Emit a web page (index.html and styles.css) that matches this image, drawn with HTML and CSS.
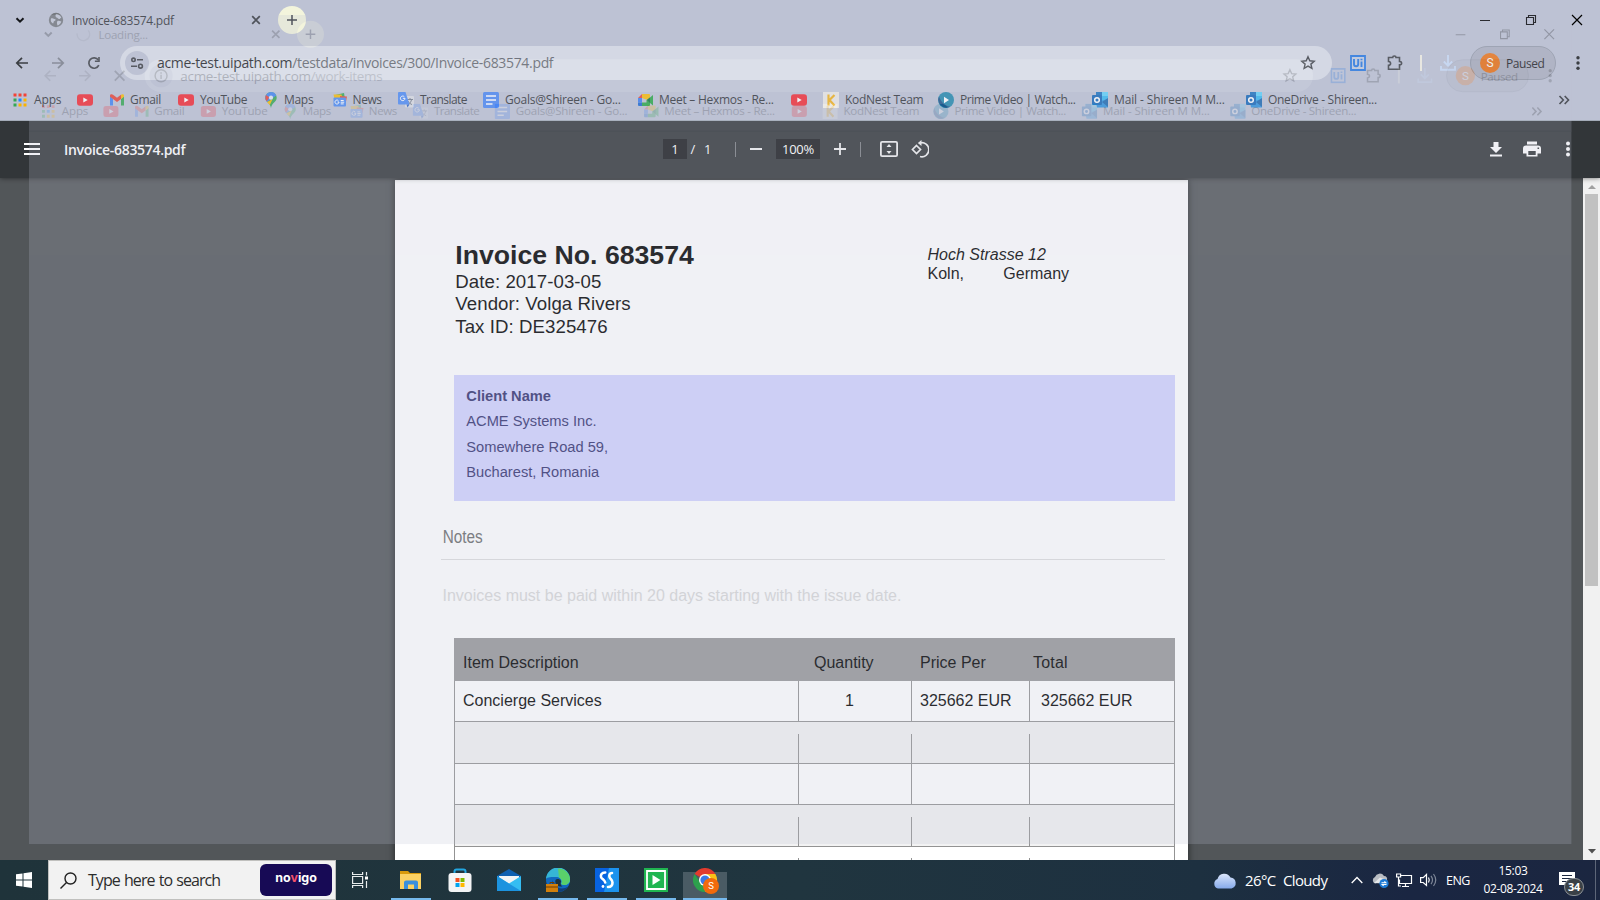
FILE: index.html
```html
<!DOCTYPE html>
<html lang="en">
<head>
<meta charset="utf-8">
<title>Invoice-683574.pdf</title>
<link rel="stylesheet" href="styles.css">
</head>
<body>
<svg class="defs" width="0" height="0">
  <symbol id="i-chev" viewBox="0 0 16 16"><path d="M4.5 6.2 8 9.7l3.500-3.500" fill="none" stroke="currentColor" stroke-width="2"/></symbol>
  <symbol id="i-globe" viewBox="0 0 16 16"><circle cx="8" cy="8" r="7.200" fill="#75797f"/><path d="M3 6.500c1.500-.5 2 .5 3.500.5s1.500 1.500 0 2-.5 2-1.500 2.500C3 10.500 2.300 8.500 3 6.500zM8 2.300c2.500-.2 4.500 1.300 5.300 3.400-1 .3-1.300 1.300-2.300 1.300S9.500 5.500 8.500 5.500 7 3 8 2.300zM9.500 9c1.500-.5 2.500.3 3.800.5-.6 2-2 3.500-3.800 4-.5-1.500-1-3.500 0-4.500z" fill="#c3c8d7"/></symbol>
  <symbol id="i-x" viewBox="0 0 16 16"><path d="M4.200 4.200l7.600 7.600M11.800 4.200l-7.600 7.600" stroke="currentColor" stroke-width="1.700"/></symbol>
  <symbol id="i-plus" viewBox="0 0 16 16"><path d="M8 3v10M3 8h10" stroke="currentColor" stroke-width="1.500"/></symbol>
  <symbol id="i-min" viewBox="0 0 16 16"><path d="M3 8.500h10" stroke="currentColor"/></symbol>
  <symbol id="i-restore" viewBox="0 0 16 16"><path d="M3.500 5.500h7v7h-7zM5.500 5.500v-2h7v7h-2" fill="none" stroke="currentColor" stroke-width="1.100"/></symbol>
  <symbol id="i-close" viewBox="0 0 16 16"><path d="M3 3l10 10M13 3 3 13" stroke="currentColor" stroke-width="1.200"/></symbol>
  <symbol id="i-back" viewBox="0 0 16 16"><path d="M14 8H3M8 2.800 2.800 8 8 13.200" fill="none" stroke="currentColor" stroke-width="1.700"/></symbol>
  <symbol id="i-fwd" viewBox="0 0 16 16"><path d="M2 8h11M8 2.800 13.200 8 8 13.200" fill="none" stroke="currentColor" stroke-width="1.700"/></symbol>
  <symbol id="i-reload" viewBox="0 0 16 16"><path d="M12.800 10.200A5.200 5.200 0 1 1 12.300 5" fill="none" stroke="currentColor" stroke-width="1.700"/><path d="M13.800 2v5H8.900V5.400h3.300V2z" fill="currentColor"/></symbol>
  <symbol id="i-stop" viewBox="0 0 16 16"><path d="M3 3l10 10M13 3 3 13" stroke="currentColor" stroke-width="1.800"/></symbol>
  <symbol id="i-tune" viewBox="0 0 16 16"><g fill="none" stroke="currentColor" stroke-width="1.600"><circle cx="4.500" cy="4.800" r="1.700"/><path d="M8 4.800h6M2 11.200h6"/><circle cx="11.500" cy="11.200" r="1.900"/></g></symbol>
  <symbol id="i-info" viewBox="0 0 16 16"><circle cx="8" cy="8" r="6.200" fill="none" stroke="currentColor" stroke-width="1.500"/><path d="M8 7v4.500M8 4.500v1.500" stroke="currentColor" stroke-width="1.500"/></symbol>
  <symbol id="i-star" viewBox="0 0 16 16"><path d="M8 1.800l1.800 4 4.400.4-3.300 2.900 1 4.300L8 11.100l-3.900 2.300 1-4.300L1.800 6.200l4.400-.4z" fill="none" stroke="currentColor" stroke-width="1.400"/></symbol>
  <symbol id="i-puzzle" viewBox="0 0 16 16"><path d="M1.500 2.500h4.200C5.700.5 9 .5 9 2.500h3.500v4c2.800 0 2.800 3.300 0 3.300v4.500h-11v-4c2.800-.3 2.800-3.500 0-3.800z" fill="none" stroke="currentColor" stroke-width="1.600"/></symbol>
  <symbol id="i-dl" viewBox="0 0 16 16"><path d="M8 0v10.500M3.800 6.500 8 10.700l4.200-4.200M1 11v3.700h14V11" fill="none" stroke="#cbdefa" stroke-width="1.900"/></symbol>
  <symbol id="i-kebab" viewBox="0 0 16 16"><g fill="currentColor"><circle cx="8" cy="2.800" r="1.700"/><circle cx="8" cy="8" r="1.700"/><circle cx="8" cy="13.200" r="1.700"/></g></symbol>
  <symbol id="i-ui" viewBox="0 0 16 16"><path d="M1 1h14v14H1z" fill="#cbd9ef" fill-opacity=".5" stroke="#2276e3" stroke-width="1.800"/><path d="M4 4v5.200a2.100 2.100 0 0 0 4.200 0V4M11.500 6.500V12M11.500 3.700v1.500" fill="none" stroke="#2276e3" stroke-width="1.900"/></symbol>
  <symbol id="i-apps" viewBox="0 0 14 14"><g><path fill="#f44336" d="M.5.500h3v3h-3zM5.500.500h3v3h-3zM10.500.500h3v3h-3z"/><path fill="#34a853" d="M.5 5.500h3v3h-3zM.5 10.500h3v3h-3z"/><path fill="#1e88ff" d="M5.500 5.500h3v3h-3z"/><path fill="#fbb300" d="M10.500 5.500h3v3h-3zM5.500 10.500h3v3h-3zM10.500 10.500h3v3h-3z"/></g></symbol>
  <symbol id="i-yt" viewBox="0 0 16 16"><rect y="2.300" width="16" height="11.500" rx="3" fill="#f42a33"/><path d="M6.300 5.600v4.800L10.700 8z" fill="#fff"/></symbol>
  <symbol id="i-gmail" viewBox="0 0 16 16"><path d="M1 4v9.500h3V7z" fill="#4285f4"/><path d="M15 4v9.500h-3V7z" fill="#34a853"/><path d="M1 3.500C1 2 3 1.800 4 2.700l4 3 4-3 0 4.300-4 3-4-3-3-2.200z" fill="#ea4335"/><path d="M12 2.700c1-.9 3-.7 3 .8V4.800L12 7z" fill="#fbbc04"/></symbol>
  <symbol id="i-maps" viewBox="0 0 16 16"><path d="M8 0a5.700 5.700 0 0 1 5.700 5.700C13.700 10 8.800 10.500 8 16 7.200 10.500 2.300 10 2.300 5.700A5.700 5.700 0 0 1 8 0z" fill="#34a853"/><path d="M8 0a5.700 5.700 0 0 1 5.200 3.400L4 9.900C3 8.700 2.300 7.500 2.300 5.700A5.700 5.700 0 0 1 8 0z" fill="#4285f4"/><path d="M3 2.900 6.300 5.300 3.800 9.200C2.200 7.500 1.900 5 3 2.900z" fill="#ea4335"/><path d="M9.500 7.200 4 9.900c.8 1 2 1.900 2.800 3.200z" fill="#fbbc04"/><circle cx="8" cy="5.700" r="2.100" fill="#e4e9f1"/></symbol>
  <symbol id="i-news" viewBox="0 0 16 16"><path d="M3 3l9-2 1 6H3z" fill="#34a853"/><path d="M1.500 2.500h8l1 4h-8z" fill="#fbbc04"/><path d="M8 4l7 .5-1 5H8z" fill="#ea4335"/><rect x="1.500" y="5.500" width="12.500" height="9" rx="1" fill="#4a8af4"/><path d="M7 10H5.500M7 10a2 2 0 1 1-.6-1.400M8.700 8.500h3M8.700 10.200h3.500M8.700 11.900h3" fill="none" stroke="#fff" stroke-width="1"/></symbol>
  <symbol id="i-trans" viewBox="0 0 16 16"><rect x="7" y="4" width="9" height="11.500" rx="1" fill="#dadde3"/><path d="M9 7.500h6M12 6v1.500M10 12.500c2-1 3.300-3 3.500-5M10 9c1 2 2.500 3 4 3.500" stroke="#747d8b" fill="none"/><path d="M1 0h6.500L11.500 12.500H1a1 1 0 0 1-1-1V1a1 1 0 0 1 1-1z" fill="#4d8bf5"/><path d="M8.500 12.500h3L9.500 15.500z" fill="#2d63c8"/><path d="M7 6.300H4.800M7 6.300A2.300 2.300 0 1 1 6.300 4.700" fill="none" stroke="#fff" stroke-width="1"/></symbol>
  <symbol id="i-docs" viewBox="0 0 16 16"><rect width="16" height="16" rx="1.500" fill="#4a87f4"/><path d="M3 4h10M3 8h10M3 12h6.500" stroke="#fff" stroke-width="1.600"/></symbol>
  <symbol id="i-meet" viewBox="0 0 16 16"><path d="M4 2h7a1 1 0 0 1 1 1v3L9.500 8 4 6z" fill="#fbbc04"/><path d="M4 2v4H0z" fill="#ea4335"/><path d="M0 6h4v4.500H0z" fill="#3b7ef2"/><path d="M0 10.500h4V14H1a1 1 0 0 1-1-1z" fill="#1967d2"/><path d="M4 10.500h4.500V8L12 5.500l3-2.500v10.500L12 11v2a1 1 0 0 1-1 1H4z" fill="#28a745"/><path d="M9 8l3-2.500V11z" fill="#12733a"/></symbol>
  <symbol id="i-kod" viewBox="0 0 16 16"><path d="M0 0h16v16H0z" fill="#eceae6"/><path d="M5.500 2.500v11M11.500 3 6.500 8l5 5.500" fill="none" stroke="#f3b21b" stroke-width="2.200"/></symbol>
  <symbol id="i-prime" viewBox="0 0 16 16"><circle cx="8" cy="8" r="8" fill="#2188ad"/><path d="M1 4.500a8 8 0 0 0 11 10.200C7 14 3 10 1 4.500z" fill="#1b4f86"/><path d="M6 4.700v6.600L11 8z" fill="#fff"/></symbol>
  <symbol id="i-mail" viewBox="0 0 16 16"><path d="M4 0h12v9H4z" fill="#35b8f1"/><path d="M10 0h6v4h-6z" fill="#5ed2fb"/><path d="M4 0h6v4H4z" fill="#1a73c0"/><path d="M4 10l12-3v8.500H5z" fill="#2d92de"/><path d="M10 10l6-4v9z" fill="#1b68b0"/><rect y="3" width="10" height="10" rx="1" fill="#1467b8"/><circle cx="5" cy="8" r="2.300" fill="none" stroke="#fff" stroke-width="1.500"/></symbol>
  <symbol id="i-more" viewBox="0 0 16 16"><path d="M3.500 4 7.300 8l-3.800 4M8.700 4l3.800 4-3.800 4" fill="none" stroke="currentColor" stroke-width="1.600"/></symbol>
  <symbol id="i-spin" viewBox="0 0 16 16"><path d="M2 7a6.500 6.500 0 1 0 11.500-3" fill="none" stroke="#9a9fae" stroke-width="1.300"/></symbol>
</svg>

<div class="screen">
  <div class="chrome">
    <div class="tabs">
      <svg class="ic chev"><use href="#i-chev"/></svg>
      <div class="tab"><svg class="ic"><use href="#i-globe"/></svg><span class="tabname">Invoice-683574.pdf</span><svg class="ic"><use href="#i-x"/></svg></div>
      <span class="newtab"><svg class="ic"><use href="#i-plus"/></svg></span>
      <div class="wincontrols"><svg class="ic"><use href="#i-min"/></svg><svg class="ic"><use href="#i-restore"/></svg><svg class="ic"><use href="#i-close"/></svg></div>
    </div>
    <div class="nav">
      <div class="navbtns"><svg class="ic"><use href="#i-back"/></svg><svg class="ic dim"><use href="#i-fwd"/></svg><svg class="ic"><use href="#i-reload"/></svg></div>
      <div class="omnibox"><span class="site"><svg class="ic"><use href="#i-tune"/></svg></span><span class="url">acme-test.uipath.com<i>/testdata/invoices/300/Invoice-683574.pdf</i></span><svg class="ic"><use href="#i-star"/></svg></div>
      <div class="exts"><svg class="ic"><use href="#i-ui"/></svg><svg class="ic"><use href="#i-puzzle"/></svg><span class="bar"></span><svg class="ic"><use href="#i-dl"/></svg></div>
      <div class="profile"><span class="avatar">S</span><span>Paused</span></div>
      <svg class="ic"><use href="#i-kebab"/></svg>
    </div>
    <div class="marks">
      <span><svg class="ic"><use href="#i-apps"/></svg>Apps</span>
      <span><svg class="ic"><use href="#i-yt"/></svg></span>
      <span><svg class="ic"><use href="#i-gmail"/></svg>Gmail</span>
      <span><svg class="ic"><use href="#i-yt"/></svg>YouTube</span>
      <span><svg class="ic"><use href="#i-maps"/></svg>Maps</span>
      <span><svg class="ic"><use href="#i-news"/></svg>News</span>
      <span><svg class="ic"><use href="#i-trans"/></svg>Translate</span>
      <span><svg class="ic"><use href="#i-docs"/></svg>Goals@Shireen - Go...</span>
      <span><svg class="ic"><use href="#i-meet"/></svg>Meet – Hexmos - Re...</span>
      <span><svg class="ic"><use href="#i-yt"/></svg></span>
      <span><svg class="ic"><use href="#i-kod"/></svg>KodNest Team</span>
      <span><svg class="ic"><use href="#i-prime"/></svg>Prime Video | Watch...</span>
      <span><svg class="ic"><use href="#i-mail"/></svg>Mail - Shireen M M...</span>
      <span><svg class="ic"><use href="#i-mail"/></svg>OneDrive - Shireen...</span>
      <svg class="ic"><use href="#i-more"/></svg>
    </div>
  </div>

  <div class="pdfbar">
    <div class="pdfleft">
      <svg width="16" height="12"><path d="M0 1h16M0 6h16M0 11h16" stroke="#fff" stroke-width="2"/></svg>
      <b>Invoice-683574.pdf</b>
    </div>
    <div class="pdfmid">
      <span class="field page-no">1</span><span class="slash">/</span><span class="total">1</span>
      <i class="sep"></i>
      <svg class="minus" width="12" height="12"><path d="M0 6h12" stroke="#f1f1f1" stroke-width="2"/></svg>
      <span class="field zoom">100%</span>
      <svg class="add" width="12" height="12"><path d="M0 6h12M6 0v12" stroke="#f1f1f1" stroke-width="1.800"/></svg>
      <i class="sep"></i>
      <svg class="fit" width="18" height="16"><rect x=".9" y=".9" width="16.200" height="14.200" rx="1.200" fill="none" stroke="#f1f1f1" stroke-width="1.800"/><path d="M9 3l2.500 3h-5zM9 13l2.500-3h-5z" fill="#f1f1f1"/></svg>
      <svg class="rot" width="18" height="18" viewBox="0 0 18 18"><path d="M5.500 5.500 9.500 9.500 5.500 13.500 1.500 9.500z" fill="none" stroke="#f1f1f1" stroke-width="1.700"/><path d="M9 3a7 7 0 1 1 0 13.500" fill="none" stroke="#f1f1f1" stroke-width="1.700"/><path d="M10.500 0v6L6.800 3z" fill="#f1f1f1"/></svg>
    </div>
    <div class="pdfright">
      <svg width="14" height="16"><path d="M4.500 1h5v5H13L7 12 1 6h3.500zM1 13.500h12v2H1z" fill="#fff"/></svg>
      <svg class="print" width="18" height="16"><path d="M4 .5h10v3H4zM3 4.500h12a3 3 0 0 1 3 3v5h-3.500v3h-11v-3H0v-5a3 3 0 0 1 3-3zM5.300 10v4h7.400v-4zM14.500 6.500v1.600h1.600V6.500z" fill="#fff" fill-rule="evenodd"/></svg>
      <svg width="6" height="16"><g fill="#fff"><circle cx="3" cy="2.500" r="2"/><circle cx="3" cy="8" r="2"/><circle cx="3" cy="13.500" r="2"/></g></svg>
    </div>
  </div>

  <div class="viewer">
    <div class="canvas">
      <article class="paper">
        <header class="inv-head">
          <div class="inv-id"><h1>Invoice No. 683574</h1><p>Date: 2017-03-05</p><p>Vendor: Volga Rivers</p><p>Tax ID: DE325476</p></div>
          <address><em>Hoch Strasse 12</em><span class="city"><span>Koln,</span><span>Germany</span></span></address>
        </header>
        <section class="client"><b>Client Name</b><p>ACME Systems Inc.</p><p>Somewhere Road 59,</p><p>Bucharest, Romania</p></section>
        <section class="notes"><h2><span>Notes</span></h2><p>Invoices must be paid within 20 days starting with the issue date.</p></section>
        <div class="items">
          <div class="row head"><span>Item Description</span><span>Quantity</span><span>Price Per</span><span>Total</span></div>
          <div class="row vals"><span>Concierge Services</span><span>1</span><span>325662 EUR</span><span>325662 EUR</span></div>
          <div class="row alt"><span></span><span></span><span></span><span></span></div>
          <div class="row"><span></span><span></span><span></span><span></span></div>
          <div class="row alt"><span></span><span></span><span></span><span></span></div>
          <div class="row last"><span></span><span></span><span></span><span></span></div>
        </div>
      </article>
    </div>
    <div class="scroll">
      <svg width="17" height="17"><path d="M5 11h8L9 7z" fill="#a0a0a0"/></svg>
      <div class="thumb"></div>
      <svg width="17" height="17"><path d="M5 6h8l-4 4.500z" fill="#505050"/></svg>
    </div>
  </div>

  <footer class="taskbar">
    <svg class="start" width="16" height="16"><path d="M0 2.300 6.500 1.400v6.100H0zM7.500 1.200 16 0v7.500H7.500zM0 8.500h6.500v6.100L0 13.700zM7.500 8.500H16V16l-8.500-1.200z" fill="#fff"/></svg>
    <div class="search">
      <svg width="17" height="17"><circle cx="10.500" cy="6.500" r="5.500" fill="none" stroke="#222" stroke-width="1.400"/><path d="M6.500 10.500.5 16.500" stroke="#222" stroke-width="1.400"/></svg>
      <span class="hint">Type here to search</span>
      <span class="novigo">no<span class="vee">v</span>igo</span>
    </div>
    <svg class="taskview" width="16" height="16"><g fill="none" stroke="#e8eced" stroke-width="1.200"><path d="M.6 0v2.500h10V0M.6 4.500h10v7H.6zM.6 16v-2.500h10V16M14.500 0v3.500M14.500 9v7"/></g><path d="M13 4.500h3v3h-3z" fill="#fff"/></svg>
    <div class="apps">
      <span class="open"><svg width="24" height="24"><path d="M1 3h8l2 2h11v6H1z" fill="#d99a0b"/><path d="M1 6h21v15H1z" fill="#fbd163"/><path d="M5 21v-6.500a2 2 0 0 1 2-2h10a2 2 0 0 1 2 2V21h-4v-4.500H9V21z" fill="#3a8fdc"/></svg></span>
      <span><svg width="24" height="24"><path d="M6.500 7V3.500a2 2 0 0 1 2-2h7a2 2 0 0 1 2 2V7" fill="none" stroke="#22a6e0" stroke-width="2"/><rect x=".5" y="5" width="23" height="19" rx="3" fill="#f3f4f5"/><path d="M7.500 10h4v4h-4z" fill="#f25022"/><path d="M12.500 10h4v4h-4z" fill="#7fba00"/><path d="M7.500 15h4v4h-4z" fill="#00a4ef"/><path d="M12.500 15h4v4h-4z" fill="#ffb900"/></svg></span>
      <span><svg width="24" height="24"><path d="M12 1l12 7v6H0V8z" fill="#0e5fb0"/><path d="M2 8h20v6L12 18 2 14z" fill="#f1f3f5"/><path d="M0 8l12 7.500L24 8v15H0z" fill="#35bdf2"/><path d="M0 8l24 15H0z" fill="#1c93df"/></svg></span>
      <span class="open"><svg width="24" height="24"><circle cx="12" cy="12" r="12" fill="#1169c0"/><path d="M0 11A12 12 0 0 1 24 12c0 5-6 6-9 4 2-4-1-7-5-7S1 9 0 11z" fill="#36b6d6"/><path d="M12 0.500c8 0 12 6 12 11s-6 7-9 4.500c2-3 0-5.500-2-6.500z" fill="#5ad06b"/><path d="M7 12c-1 7 8 11 15.500 6.500C20 22 16 24 12 24 7 22 5 16 7 12z" fill="#123f78"/><path d="M9.500 12c-1 4 2 7 7 6.500-3-2-1.500-4-1.500-5.500-1.500-2.500-4.500-2.500-5.500-1z" fill="#1d323d"/><rect y="16" width="12" height="8" fill="#d17f0c"/><path d="M0 19h12M4 16v-1.500h4V16" stroke="#6d3d05" fill="none"/></svg></span>
      <span class="open"><svg width="24" height="24"><path d="M0 0h24v24H0z" fill="#0863e0"/><path d="M14 0h10v24H9z" fill="#1c93ee"/><path d="M10.200 4.500C6.500 4.500 5.500 7 6 9s4.200 3 4.200 5.500" fill="none" stroke="#fff" stroke-width="2.600" stroke-linecap="round"/><path d="M17 5c-2.500 0-3 2-2.500 4s3 3 3 5.500-1.500 4.500-4.500 4.500" fill="none" stroke="#fff" stroke-width="2.600" stroke-linecap="round"/><circle cx="8" cy="18.500" r="1.400" fill="#fff"/></svg></span>
      <span class="open"><svg width="24" height="24"><path d="M0 0h24v24H0z" fill="#20b551"/><path d="M3 3h18v18H3z" fill="none" stroke="#fff" stroke-width="1.800"/><path d="M8.500 7v10l8-5z" fill="#fff"/></svg></span>
      <span class="open active"><svg width="27" height="26"><path d="M12 12 1.600 6A12 12 0 0 1 22.400 6z" fill="#e33b2e"/><path d="M12 12V6h10.400A12 12 0 0 1 12 24z" fill="#fbc116"/><path d="M1.600 6A12 12 0 0 0 12 24l5-9-10-1z" fill="#2da14c"/><circle cx="12" cy="12" r="6" fill="#fff"/><circle cx="12" cy="12" r="4.600" fill="#3b78e7"/><circle cx="18" cy="18" r="8" fill="#f26a0b"/><text x="18" y="21.300" text-anchor="middle" font-size="9.500" fill="#fff" font-family="Roboto, sans-serif">S</text></svg></span>
    </div>
    <div class="tray">
      <svg class="cloud" width="24" height="17"><defs><linearGradient id="cg" x2="0" y2="1"><stop offset="0" stop-color="#dbe6fb"/><stop offset="1" stop-color="#86aaea"/></linearGradient></defs><path d="M5 16.500a5 5 0 0 1-.5-9.500A7 7 0 0 1 17.500 5.500 5.600 5.600 0 0 1 18.500 16.500z" fill="url(#cg)"/></svg>
      <span class="temp">26°C</span><span class="sky">Cloudy</span>
      <svg class="up" width="12" height="8"><path d="M.7 7 6 1.500 11.300 7" fill="none" stroke="#fff" stroke-width="1.300"/></svg>
      <svg class="sync" width="18" height="16"><path d="M3 10.500A3.500 3.500 0 0 1 3 4a5 5 0 0 1 9-1c2.500 0 3.500 2 3 4z" fill="#b9bdc3"/><path d="M2 10 8 4.500l4 1.500v4.500z" fill="#e6e8ea"/><circle cx="12" cy="10.500" r="4.600" fill="#1e7bd6"/><path d="M9.500 9.800h4.300l-1.400-1.400M14.500 11.500h-4.300l1.400 1.400" fill="none" stroke="#fff" stroke-width="1.100"/></svg>
      <svg class="net" width="17" height="15"><path d="M4.500 2.500h11v8H3.500V6.500M9.500 10.500v3M6 13.500h7M.6 1h4v3h-4zM2.500 4v9H5" fill="none" stroke="#fff" stroke-width="1.200"/></svg>
      <svg class="vol" width="17" height="14"><path d="M.6 4.700h2.600L6.500 1.500v11L3.200 9.500H.6z" fill="none" stroke="#fff" stroke-width="1.200"/><path d="M8.500 4.500q1.500 2.500 0 5" fill="none" stroke="#fff" stroke-width="1.200"/><path d="M11 2.800q3 4.200 0 8.400M13.500 1q4.500 6 0 12" fill="none" stroke="#7e8798" stroke-width="1.200"/></svg>
      <span class="lang">ENG</span>
      <div class="clock"><span>15:03</span><span>02-08-2024</span></div>
      <div class="notif"><svg width="17" height="17"><path d="M0 0h16v13h-5l-3 3.500V13H0z" fill="#fff"/><path d="M3 3.500h10M3 6.500h10M3 9.500h6" stroke="#1b2740" stroke-width="1.200"/></svg><b>34</b></div>
      <i class="desk"></i>
    </div>
  </footer>

  <!-- second window, fading in over the first -->
  <div class="fade">
    <div class="chrome">
      <div class="tabs">
        <svg class="ic chev"><use href="#i-chev"/></svg>
        <div class="tab"><svg class="ic"><use href="#i-spin"/></svg><span class="tabname">Loading...</span><svg class="ic"><use href="#i-x"/></svg></div>
        <span class="newtab"><svg class="ic"><use href="#i-plus"/></svg></span>
        <div class="wincontrols"><svg class="ic"><use href="#i-min"/></svg><svg class="ic"><use href="#i-restore"/></svg><svg class="ic"><use href="#i-close"/></svg></div>
      </div>
      <div class="nav">
        <div class="navbtns"><svg class="ic dim"><use href="#i-back"/></svg><svg class="ic dim"><use href="#i-fwd"/></svg><svg class="ic"><use href="#i-stop"/></svg></div>
        <div class="omnibox"><span class="site"><svg class="ic"><use href="#i-info"/></svg></span><span class="url">acme-test.uipath.com<i>/work-items</i></span><svg class="ic"><use href="#i-star"/></svg></div>
        <div class="exts"><svg class="ic"><use href="#i-ui"/></svg><svg class="ic"><use href="#i-puzzle"/></svg><span class="bar"></span><svg class="ic"><use href="#i-dl"/></svg></div>
        <div class="profile"><span class="avatar">S</span><span>Paused</span></div>
        <svg class="ic"><use href="#i-kebab"/></svg>
      </div>
      <div class="marks">
        <span><svg class="ic"><use href="#i-apps"/></svg>Apps</span>
        <span><svg class="ic"><use href="#i-yt"/></svg></span>
        <span><svg class="ic"><use href="#i-gmail"/></svg>Gmail</span>
        <span><svg class="ic"><use href="#i-yt"/></svg>YouTube</span>
        <span><svg class="ic"><use href="#i-maps"/></svg>Maps</span>
        <span><svg class="ic"><use href="#i-news"/></svg>News</span>
        <span><svg class="ic"><use href="#i-trans"/></svg>Translate</span>
        <span><svg class="ic"><use href="#i-docs"/></svg>Goals@Shireen - Go...</span>
        <span><svg class="ic"><use href="#i-meet"/></svg>Meet – Hexmos - Re...</span>
        <span><svg class="ic"><use href="#i-yt"/></svg></span>
        <span><svg class="ic"><use href="#i-kod"/></svg>KodNest Team</span>
        <span><svg class="ic"><use href="#i-prime"/></svg>Prime Video | Watch...</span>
        <span><svg class="ic"><use href="#i-mail"/></svg>Mail - Shireen M M...</span>
        <span><svg class="ic"><use href="#i-mail"/></svg>OneDrive - Shireen...</span>
        <svg class="ic"><use href="#i-more"/></svg>
      </div>
    </div>
  </div>
</div>
</body>
</html>
```

FILE: styles.css
```css
* { box-sizing: border-box; margin: 0; padding: 0; }
body { font-family: "Open Sans", "Noto Sans", sans-serif; overflow: hidden; }
.defs { display: none; }
svg { display: block; flex: none; }
.screen { width: 1600px; height: 900px; display: flex; flex-direction: column; position: relative; overflow: hidden; }
.ic { width: 16px; height: 16px; }

/* browser window */
.chrome { height: 121px; background: #bdc2d4; border-bottom: 1px solid #a3abb8; color: #303338; font-size: 12px; letter-spacing: -.3px; white-space: nowrap; }
.tabs { height: 40px; display: flex; align-items: center; padding: 0 15px 0 12px; }
.chev { color: #14161a; }
.tab { display: flex; align-items: center; width: 216px; margin-left: 20px; }
.tabname { flex: 1; padding-left: 8px; letter-spacing: -.25px; }
.newtab { width: 28px; height: 28px; margin-left: 14px; border-radius: 50%; background: #f3f4dc; display: flex; align-items: center; justify-content: center; }
.wincontrols { margin-left: auto; display: flex; gap: 30px; color: #000; }
.nav { height: 46px; display: flex; align-items: center; padding-left: 14px; color: #3b3e43; }
.navbtns { display: flex; gap: 20px; width: 106px; }
.dim { opacity: .5; }
.omnibox { width: 1212px; height: 34px; border-radius: 17px; background: #dbdfe9; display: flex; align-items: center; padding: 0 16px 0 5px; }
.site { width: 24px; height: 24px; border-radius: 50%; background: #bec3d4; display: flex; align-items: center; justify-content: center; }
.url { flex: 1; padding-left: 8px; font-size: 14px; line-height: 18px; padding-bottom: 1px; letter-spacing: -.33px; color: #16191e; }
.url i { font-style: normal; color: #5a5e66; }
.exts { display: flex; align-items: center; padding-left: 18px; width: 138px; }
.exts .ic:nth-child(2) { margin-left: 21px; }
.exts .bar { width: 2px; height: 16px; background: #f5f3e6; margin: 0 18px 0 17px; }
.profile { width: 86px; height: 34px; border-radius: 17px; border: 1px solid #969cab; background: #adb1c1; display: flex; align-items: center; gap: 6px; padding-left: 9px; color: #1d2024; letter-spacing: -.45px; }
.avatar { width: 20px; height: 20px; border-radius: 50%; background: #ef7414; color: #fff; text-align: center; line-height: 20px; font-family: Roboto, sans-serif; letter-spacing: 0; }
.nav > .ic { margin-left: 14px; }
.marks { height: 27px; display: flex; align-items: center; padding-left: 12px; }
.marks span { display: flex; align-items: center; gap: 6px; width: 154px; }
.marks span:nth-child(1) { width: 65px; letter-spacing: -.15px; }
.marks span:nth-child(1) .ic { width: 14px; margin: 0 1px 0 1px; }
.marks span:nth-child(2) { width: 33px; }
.marks span:nth-child(3) { width: 68px; margin-left: -1px; gap: 5px; }
.marks span:nth-child(4) { width: 85px; margin-left: 1px; }
.marks span:nth-child(5) { width: 69px; gap: 5px; }
.marks span:nth-child(6) { width: 66px; gap: 4.500px; letter-spacing: -.4px; }
.marks span:nth-child(7) { width: 85px; letter-spacing: -.55px; }
.marks span:nth-child(8) { width: 155px; letter-spacing: -.22px; }
.marks span:nth-child(9) { width: 153px; gap: 5px; letter-spacing: -.27px; }
.marks span:nth-child(10) { width: 32px; }
.marks span:nth-child(11) { width: 115px; }
.marks span:nth-child(12) { letter-spacing: -.43px; }
.marks span:nth-child(13) { letter-spacing: -.13px; }
.marks > .ic { margin-left: 156px; }

/* fading window */
.fade { position: absolute; z-index: 2; left: 29px; top: 15px; width: 1600px; height: 860px; transform: scale(.964); transform-origin: 0 0; opacity: .225; background: #bdc1d3; overflow: hidden; }

/* pdf viewer */
.pdfbar { height: 57px; background: #323639; display: flex; align-items: center; color: #fff; font-size: 13px; position: relative; z-index: 1; box-shadow: 0 0 5px rgba(0,0,0,.55); clip-path: inset(0 0 -6px 0); padding-bottom: 1px; }
.pdfleft { display: flex; align-items: center; gap: 24px; padding-left: 24px; width: 663px; }
.pdfleft b { font-size: 14px; letter-spacing: -.32px; font-weight: 600; }
.pdfmid { display: flex; align-items: center; width: 826px; }
.field { background: #191b1d; height: 20px; line-height: 20px; text-align: center; }
.page-no { width: 24px; }
.slash { width: 12px; text-align: center; }
.total { margin-left: 5px; width: 7px; }
.sep { width: 1px; height: 15px; background: #7d8084; margin-left: 24px; }
.minus { margin-left: 14px; }
.zoom { width: 44px; margin-left: 14px; letter-spacing: -.3px; }
.add { margin: 0 -10px 0 14px; }
.fit { margin-left: 19px; }
.rot { margin-left: 13px; }
.pdfright { display: flex; align-items: center; width: 82px; justify-content: space-between; }
.print { margin: 0 4px 0 0; }
.viewer { height: 682px; display: flex; background: #525659; }
.canvas { flex: 1; padding: 2px 0 0 395px; overflow: hidden; }
.paper { width: 793px; height: 1000px; background: #fff; box-shadow: 0 0 7px rgba(0,0,0,.6); padding-left: 59px; font-family: "Liberation Sans", Arial, sans-serif; font-size: 16px; color: #000; }
.inv-head { height: 195px; display: flex; }
.inv-id { width: 472.500px; padding: 60px 0 0 1.300px; font-size: 18.670px; line-height: 22.500px; letter-spacing: .06px; }
.inv-id h1 { font-size: 26.670px; line-height: 30.600px; letter-spacing: 0; }
address { font-style: normal; padding: 65px 0 0 1px; line-height: 19px; }
address em { display: block; }
.city { display: flex; }
.city span:first-child { width: 75.800px; }
.client { width: 721px; height: 126px; background: #d2d3ff; color: #32326f; font-size: 14.670px; line-height: 25.400px; padding: 9px 0 0 12.300px; }
.notes { margin: 23.500px 0 32.500px -13px; width: 724px; }
.notes h2 { font-weight: 400; font-size: 18.670px; line-height: 24px; color: #6a6b6b; padding-bottom: 10.500px; border-bottom: 1px solid #dedede; }
.notes h2 span { display: inline-block; transform: scaleX(.82); transform-origin: 0 0; padding-left: 2px; }
.notes p { color: #d9d9d9; line-height: 20px; padding: 25.500px 0 0 1.500px; }
.items { width: 721px; }
.row { display: grid; grid-template-columns: 343px 113px 118px 145px; height: 41px; border: solid #939393; border-width: 0 1px 1px; }
.row span + span { border-left: 1px solid #939393; }
.row.head { height: 43px; background: #98999a; border-color: #98999a; line-height: 50px; }
.row.head span { border-color: transparent; padding-left: 8px; }
.row.head span:nth-child(2) { padding-left: 15px; }
.row.head span:nth-child(4) { padding-left: 3px; letter-spacing: .2px; }
.row.vals { line-height: 39px; }
.row.vals span { padding-left: 8px; }
.row.vals span:nth-child(2) { padding-left: 46px; }
.row.vals span:nth-child(4) { padding-left: 11px; }
.row.alt { height: 42px; background: #f3f3f3; padding-top: 12px; }
.row.last { padding-top: 11px; }
.scroll { width: 17px; background: #f1f1f1; display: flex; flex-direction: column; }
.thumb { height: 392px; width: 13px; margin: -1px 2px auto; background: #c1c1c1; }

/* taskbar */
.taskbar { height: 40px; display: flex; background: linear-gradient(90deg, #1f333a, #20353f 50%, #1d3040 75%, #1a2642 88%, #1b2640); color: #fff; align-items: center; white-space: nowrap; }
.start { margin: 0 16px; }
.search { width: 288px; height: 40px; background: #f2f2f2; border: 1px solid #c0c0be; display: flex; align-items: center; padding-left: 11px; color: #2c2c2c; }
.hint { width: 183px; flex: none; padding-left: 11px; font-size: 16px; letter-spacing: -.98px; word-spacing: 1px; }
.hint { letter-spacing: -.95px; }
.novigo { width: 72px; height: 32px; border-radius: 6px; background: #170a55; color: #fff; font: 700 12.500px/28px Inter, sans-serif; text-align: center; }
.vee { color: #f0506a; }
.taskview { margin: 0 22px 0 16px; }
.apps { display: flex; height: 40px; gap: 9px; margin-left: 1px; }
.apps span { width: 40px; padding: 8px 0 0 8px; border-bottom: 0 solid #76b9ed; }
.apps .open { border-bottom-width: 2px; }
.apps .active { width: 44px; margin-left: -2px; padding: 8px 0 0 10px; background: linear-gradient(transparent 12px, #4a5b64 12px); }
.tray { margin-left: auto; display: flex; align-items: center; height: 40px; width: 387px; }
.temp { font-size: 15px; letter-spacing: -.6px; margin-left: 8px; width: 38px; }
.sky { font-size: 15px; letter-spacing: -.65px; width: 68px; }
.sync { margin-left: 9px; margin-top: 2px; }
.net { margin-left: 6px; }
.vol { margin-left: 7px; }
.lang { font-size: 12.500px; letter-spacing: -.55px; margin-left: 9px; width: 25px; }
.clock { width: 84px; font-size: 12px; line-height: 18px; letter-spacing: -.35px; display: flex; flex-direction: column; align-items: center; }
.notif { position: relative; width: 17px; margin-left: 4px; }
.notif b { position: absolute; left: 5px; top: 6px; width: 20px; height: 18px; border-radius: 9px; background: #3a4046; border: 1px solid #8c9196; font: 700 11px/16px "Open Sans", sans-serif; text-align: center; letter-spacing: -.3px; }
.desk { width: 1px; height: 40px; background: #5d6678; margin-left: auto; margin-right: 4px; }
```
